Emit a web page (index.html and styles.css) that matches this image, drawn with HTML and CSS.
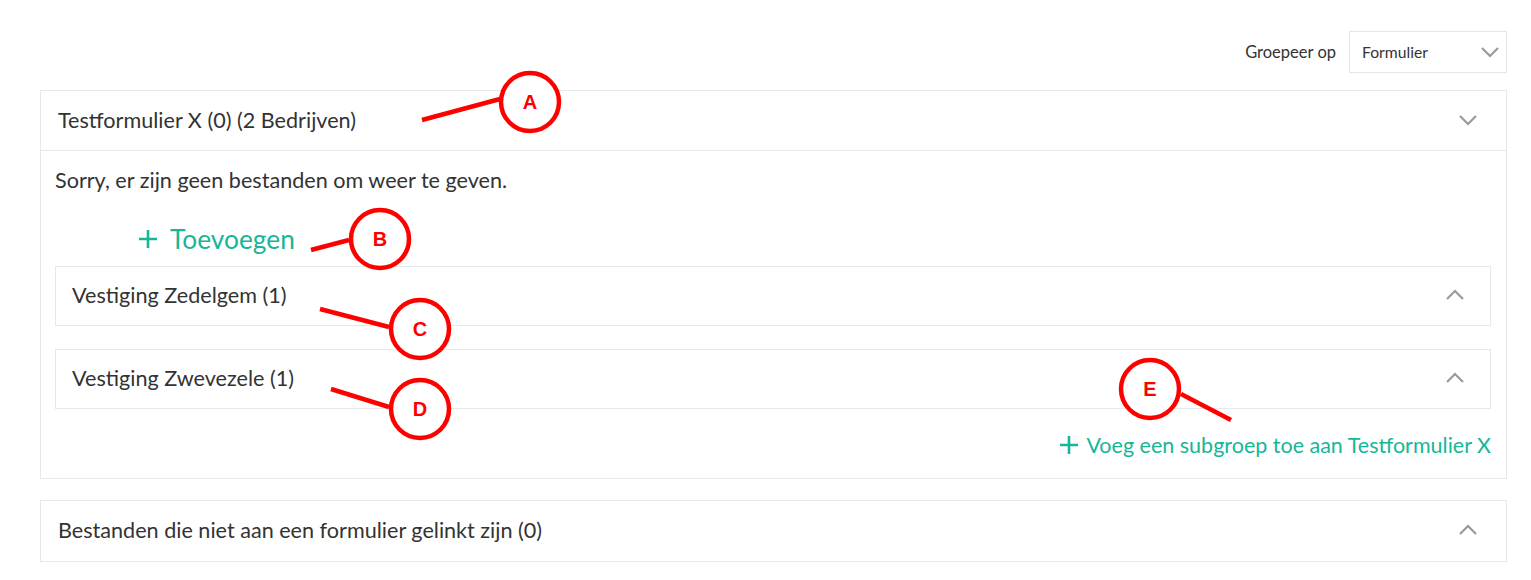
FILE: index.html
```html
<!DOCTYPE html>
<html lang="nl">

<head>
  <meta charset="UTF-8">
  <meta name="viewport" content="width=device-width, initial-scale=1.0">
  <title>Bestanden</title>
  <link rel="stylesheet" href="styles.css">
</head>

<body>
  <div class="page">
    <div class="toolbar">
      <span class="toolbarLabel">Groepeer op</span>
      <div class="select">
        <span>Formulier</span>
        <svg class="chevron" width="20" height="12" viewBox="0 0 20 12"><polyline points="2,2 10,10 18,2"/></svg>
      </div>
    </div>

    <div class="panel">
      <div class="panelHeader">
        <span>Testformulier X (0) (2 Bedrijven)</span>
        <svg class="chevron" width="20" height="12" viewBox="0 0 20 12"><polyline points="2,2 10,10 18,2"/></svg>
      </div>
      <div class="panelBody">
        <div class="empty">Sorry, er zijn geen bestanden om weer te geven.</div>
        <a class="add" href="#">
          <svg class="plus" width="20" height="20" viewBox="0 0 20 20"><path d="M10 1v18M1 10h18"/></svg>
          Toevoegen
        </a>

        <div class="subPanel">
          <span>Vestiging Zedelgem (1)</span>
          <svg class="chevron" width="20" height="12" viewBox="0 0 20 12"><polyline points="2,10 10,2 18,10"/></svg>
        </div>
        <div class="subPanel">
          <span>Vestiging Zwevezele (1)</span>
          <svg class="chevron" width="20" height="12" viewBox="0 0 20 12"><polyline points="2,10 10,2 18,10"/></svg>
        </div>

        <div class="subAddRow">
          <a class="subAdd" href="#">
            <svg class="plus" width="20" height="20" viewBox="0 0 20 20"><path d="M10 1v18M1 10h18"/></svg>
            Voeg een subgroep toe aan Testformulier X
          </a>
        </div>
      </div>
    </div>

    <div class="panel">
      <div class="panelHeader last">
        <span>Bestanden die niet aan een formulier gelinkt zijn (0)</span>
        <svg class="chevron" width="20" height="12" viewBox="0 0 20 12"><polyline points="2,10 10,2 18,10"/></svg>
      </div>
    </div>
  </div>

  <!-- annotations drawn over the screenshot -->
  <svg class="notes" width="1531" height="580" viewBox="0 0 1531 580">
    <g class="noteLines">
      <line x1="422" y1="120" x2="500" y2="99"/>
      <line x1="311" y1="250" x2="349" y2="240"/>
      <line x1="320" y1="309" x2="389" y2="327"/>
      <line x1="331" y1="389" x2="389" y2="407"/>
      <line x1="1181" y1="394" x2="1231" y2="420"/>
      <circle cx="530" cy="102" r="29"/>
      <circle cx="380" cy="239" r="29"/>
      <circle cx="420" cy="329" r="29"/>
      <circle cx="420" cy="409" r="29"/>
      <circle cx="1150" cy="389" r="29"/>
    </g>
    <g class="noteText">
      <text x="530" y="109">A</text>
      <text x="380" y="246">B</text>
      <text x="420" y="336">C</text>
      <text x="420" y="416">D</text>
      <text x="1150" y="396">E</text>
    </g>
  </svg>
</body>

</html>
```

FILE: styles.css
```css
body {
  margin: 0;
  background-color: #fff;
  color: #333;
  font-family: Lato, "Open Sans", sans-serif;
  position: relative;
  overflow: hidden;
}

.page {
  padding: 31px 24px 0 40px;
}

.toolbar {
  display: flex;
  justify-content: flex-end;
  align-items: center;
  gap: 13px;
}

.toolbarLabel {
  font-size: 16.5px;
}

.select {
  width: 158px;
  height: 42px;
  box-sizing: border-box;
  border: 1px solid #e6e6e6;
  display: flex;
  align-items: center;
  justify-content: space-between;
  padding: 0 6px 0 12px;
  font-size: 15.7px;
}

.chevron polyline {
  fill: none;
  stroke: #9a9a9a;
  stroke-width: 2.2;
}

.panel {
  border: 1px solid #e8e8e8;
  margin-top: 17px;
}

.panel + .panel {
  margin-top: 21px;
}

.panelHeader {
  height: 60px;
  box-sizing: border-box;
  border-bottom: 1px solid #e8e8e8;
  display: flex;
  align-items: center;
  justify-content: space-between;
  padding: 0 28px 2px 17px;
  font-size: 21.6px;
}

.panelHeader.last {
  border-bottom: none;
  height: 60px;
}

.panelBody {
  padding: 18px 15px 19px 14px;
}

.empty {
  font-size: 21.6px;
  line-height: 22px;
}

.add {
  display: inline-flex;
  align-items: center;
  gap: 12px;
  margin: 33px 0 0 83px;
  color: #17b697;
  text-decoration: none;
  font-size: 26.3px;
  line-height: 30px;
}

.plus path {
  stroke: #17b697;
  stroke-width: 2.6;
  fill: none;
}

.subPanel {
  height: 60px;
  box-sizing: border-box;
  border: 1px solid #e8e8e8;
  display: flex;
  align-items: center;
  justify-content: space-between;
  padding: 0 25px 2px 16px;
  font-size: 21.6px;
  margin-top: 23px;
}

.add + .subPanel {
  margin-top: 12px;
}

.subAddRow {
  display: flex;
  justify-content: flex-end;
  margin-top: 22px;
}

.subAdd {
  display: inline-flex;
  align-items: center;
  gap: 7px;
  color: #17b697;
  text-decoration: none;
  font-size: 21.5px;
  line-height: 28px;
}

.notes {
  position: absolute;
  left: 0;
  top: 0;
  pointer-events: none;
}

.noteLines line,
.noteLines circle {
  stroke: #ff0000;
  stroke-width: 4.5;
  fill: none;
}

.noteLines circle {
  fill: #fff;
}

.noteText text {
  fill: #ff0000;
  font-family: "Liberation Sans", Arial, sans-serif;
  font-weight: bold;
  font-size: 20px;
  text-anchor: middle;
}
```
